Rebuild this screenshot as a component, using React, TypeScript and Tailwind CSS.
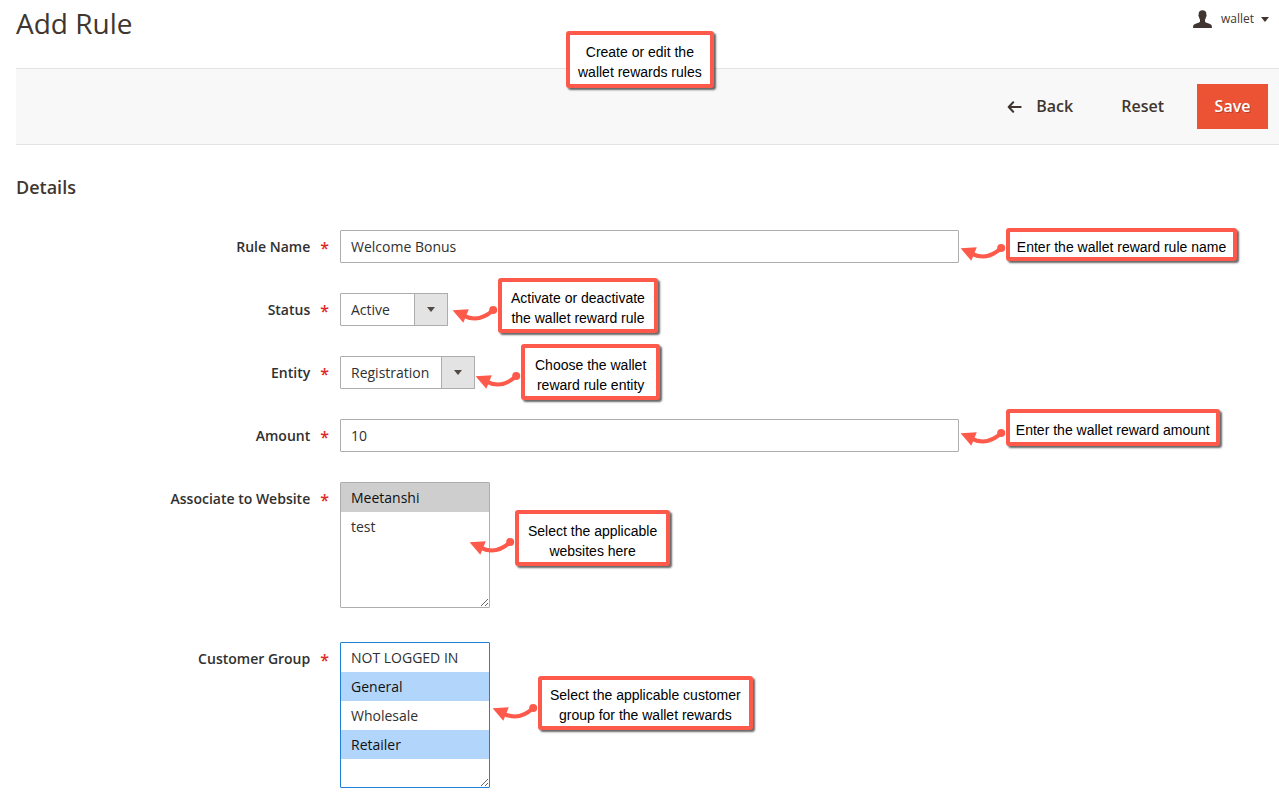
import React from "react";

function Arrow({ className }: { className: string }) {
  return (
    <svg
      width="47"
      height="24"
      viewBox="0 0 47 24"
      fill="none"
      aria-hidden="true"
      className={`shrink-0 ${className}`}
    >
      <path d="M1.6 8.3 17.8 7.3 12.3 20.8Z" fill="#fe5a4c" />
      <path d="M12.5 13.6C23 19 32.500 17 42 8.300" stroke="#fe5a4c" strokeWidth="4" />
      <circle cx="42.200" cy="7.900" r="4" fill="#fe5a4c" />
    </svg>
  );
}

function Note({ lines, className }: { lines: string[]; className: string }) {
  return (
    <div
      className={`rounded-[3px] border-4 border-[#fe5a4c] bg-white text-center font-['Liberation_Sans',Arial,sans-serif] text-sm leading-5 whitespace-nowrap text-black shadow-[2px_2px_2px_rgba(0,0,0,0.6)] ${className}`}
    >
      {lines.map((line) => (
        <div key={line}>{line}</div>
      ))}
    </div>
  );
}

type CalloutProps = {
  lines: string[];
  place: string;
  arrow?: string;
  box: string;
};

function Callout({ lines, place, arrow = "mt-6", box }: CalloutProps) {
  return (
    <div className={`pointer-events-none absolute left-full z-10 flex items-start ${place}`}>
      <Arrow className={arrow} />
      <Note lines={lines} className={box} />
    </div>
  );
}

type FieldProps = {
  id: string;
  label: string;
  wide?: boolean;
  callout: CalloutProps;
  children: React.ReactNode;
};

function Field({ id, label, wide = false, callout, children }: FieldProps) {
  return (
    <div className="flex items-start">
      <label
        htmlFor={id}
        className="flex h-[33px] w-[324px] shrink-0 justify-end pr-[11px] text-sm leading-[33px] font-semibold text-[#303030]"
      >
        {label}
        <span className="ml-[10px] pt-0.5 text-base leading-[33px] font-semibold text-[#e22626]">*</span>
      </label>
      <div className={wide ? "relative w-[49%]" : "relative"}>
        {children}
        <Callout {...callout} />
      </div>
    </div>
  );
}

const inputClass =
  "block h-[33px] w-full rounded-[1px] border border-[#adadad] bg-white px-[10px] text-sm text-[#303030] outline-none focus:border-[#007bdb]";

function Dropdown({ id, options, width }: { id: string; options: string[]; width: string }) {
  return (
    <div className={`relative ${width}`}>
      <select
        id={id}
        className="block h-[33px] w-full appearance-none rounded-[1px] border border-[#adadad] bg-white pr-9 pl-[10px] text-sm text-[#303030] outline-none"
      >
        {options.map((option) => (
          <option key={option}>{option}</option>
        ))}
      </select>
      <span className="pointer-events-none absolute inset-y-0 right-0 flex w-[34px] items-center justify-center border border-[#adadad] bg-[#e3e3e3]">
        <svg width="8" height="5" viewBox="0 0 8 5" aria-hidden="true">
          <path d="M0 0H8L4 5Z" fill="#514943" />
        </svg>
      </span>
    </div>
  );
}

const listClass =
  "block w-[150px] resize-y overflow-auto rounded-[1px] border bg-white text-sm text-[#303030] outline-none";
const optionClass = "h-[29px] px-[10px] pt-[5px] pb-0 leading-5";

export default function App() {
  return (
    <div className="min-h-screen overflow-hidden bg-white pl-4 font-['Open_Sans',sans-serif] text-[#41362f]">
      <header className="relative flex h-[68px] items-start justify-between pr-[10px]">
        <h1 className="pt-[3px] text-[28px] leading-10">Add Rule</h1>
        <button type="button" className="flex items-center pt-[9px] text-xs leading-5">
          <svg width="19" height="18" viewBox="0 0 19 18" aria-hidden="true" className="mr-[9px]">
            <path
              fill="#41362f"
              d="M9.500.2C7 .2 5.700 1.600 5.700 3.600v1c-.4.200-.4.700-.3 1.200.1.600.3.900.6 1.100.1 1.100.5 2 1 2.600v2.300c-.6.900-1.900 1.200-3.600 1.700C1.400 14.100.5 14.600.3 15.600L0 18h19l-.3-2.400c-.2-1-1.100-1.500-3.100-2.100-1.700-.5-3-.8-3.600-1.700V9.500c.5-.6.9-1.500 1-2.600.3-.2.500-.5.6-1.100.1-.5.1-1-.3-1.200v-1C13.300 1.600 12 .2 9.500.2Z"
            />
          </svg>
          wallet
          <svg width="8" height="5" viewBox="0 0 8 5" aria-hidden="true" className="ml-[7px]">
            <path d="M0 0H8L4 5Z" fill="#41362f" />
          </svg>
        </button>
        <div className="absolute top-[31px] left-[550px] z-10">
          <Note
            lines={["Create or edit the", "wallet rewards rules"]}
            className="px-[8px] pt-[7px] pb-[2px]"
          />
        </div>
      </header>

      <div className="flex items-center justify-end border-y border-[#e3e3e3] bg-[#f8f8f8] py-[15px] pr-[11px] text-base leading-[45px] font-semibold">
        <button type="button" className="flex items-center px-4">
          <svg width="15" height="12" viewBox="0 0 15 12" fill="none" aria-hidden="true" className="mr-[14px]">
            <path
              d="M6.200 1.200 1.700 6l4.500 4.800M1.700 6h12"
              stroke="#41362f"
              strokeWidth="2"
              strokeLinecap="round"
              strokeLinejoin="round"
            />
          </svg>
          Back
        </button>
        <button type="button" className="mr-4 ml-[15px] px-[17px]">
          Reset
        </button>
        <button
          type="button"
          className="min-w-[71px] bg-[#ec5335] px-4 text-white [text-shadow:1px_1px_0_rgba(0,0,0,0.25)]"
        >
          Save
        </button>
      </div>

      <form onSubmit={(event) => event.preventDefault()}>
        <h2 className="pt-7 pb-7 text-lg leading-[29px] font-semibold">Details</h2>
        <div className="flex flex-col gap-[30px]">
          <Field
            id="rule-name"
            label="Rule Name"
            wide
            callout={{
              lines: ["Enter the wallet reward rule name"],
              place: "-top-[2px]",
              arrow: "mt-3",
              box: "px-[7px] pt-[5px] pb-0",
            }}
          >
            <input id="rule-name" type="text" defaultValue="Welcome Bonus" className={inputClass} />
          </Field>
          <Field
            id="status"
            label="Status"
            callout={{
              lines: ["Activate or deactivate", "the wallet reward rule"],
              place: "-top-[15px] ml-[3px]",
              box: "px-[9px] pt-[6px] pb-px",
            }}
          >
            <Dropdown id="status" options={["Active", "Inactive"]} width="w-[108px]" />
          </Field>
          <Field
            id="entity"
            label="Entity"
            callout={{
              lines: ["Choose the wallet", "reward rule entity"],
              place: "-top-[12px] -ml-px",
              box: "px-[10px] pt-[7px] pb-px",
            }}
          >
            <Dropdown id="entity" options={["Registration"]} width="w-[135px]" />
          </Field>
          <Field
            id="amount"
            label="Amount"
            wide
            callout={{
              lines: ["Enter the wallet reward amount"],
              place: "-top-[10px]",
              arrow: "mt-4",
              box: "px-[6px] pt-[7px] pb-[2px]",
            }}
          >
            <input id="amount" type="text" defaultValue="10" className={inputClass} />
          </Field>
          <Field
            id="websites"
            label="Associate to Website"
            callout={{
              lines: ["Select the applicable", "websites here"],
              place: "top-[28px] -ml-[22px]",
              box: "px-[9px] pt-[7px] pb-px",
            }}
          >
            <select
              id="websites"
              multiple
              defaultValue={["Meetanshi"]}
              className={`h-[126px] border-[#adadad] ${listClass}`}
            >
              <option className={optionClass}>Meetanshi</option>
              <option className={optionClass}>test</option>
            </select>
          </Field>
          <div className="pt-1">
            <Field
              id="groups"
              label="Customer Group"
              callout={{
                lines: ["Select the applicable customer", "group for the wallet rewards"],
                place: "top-[34px] ml-px",
                box: "px-[8px] pt-[5px] pb-px",
              }}
            >
              <select
                id="groups"
                multiple
                defaultValue={["General", "Retailer"]}
                className={`h-[146px] border-[#2080d8] ${listClass}`}
              >
                {["NOT LOGGED IN", "General", "Wholesale", "Retailer"].map((group) => (
                  <option
                    key={group}
                    className={`checked:bg-[linear-gradient(#b2d5fb,#b2d5fb)] ${optionClass}`}
                  >
                    {group}
                  </option>
                ))}
              </select>
            </Field>
          </div>
        </div>
      </form>
    </div>
  );
}
